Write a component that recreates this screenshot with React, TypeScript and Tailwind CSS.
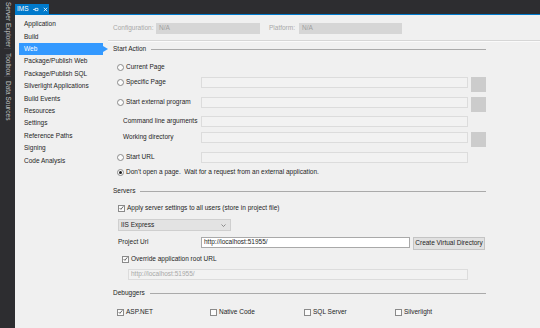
import React from "react";

const FONT = "font-['Liberation_Sans',Arial,sans-serif]";

function Radio({ checked = false }: { checked?: boolean }) {
  return (
    <span className="w-[7px] h-[7px] rounded-full border border-[#8a8a8a] bg-[#fbfbfb] flex items-center justify-center shrink-0">
      {checked && <span className="w-[3px] h-[3px] rounded-full bg-[#1e1e1e]" />}
    </span>
  );
}

function Check({ checked = false }: { checked?: boolean }) {
  return (
    <span className="w-[7px] h-[7px] border border-[#8a8a8a] bg-[#fbfbfb] flex items-center justify-center shrink-0">
      {checked && (
        <svg width="6" height="6" viewBox="0 0 6 6">
          <path d="M0.8 3.1 L2.3 4.6 L5.2 1.0" fill="none" stroke="#333" strokeWidth="0.9" />
        </svg>
      )}
    </span>
  );
}

function Header({ label, className = "" }: { label: string; className?: string }) {
  return (
    <div className={`flex items-center w-[373px] h-[12px] ${className}`}>
      <span className="text-[#1e1e1e]">{label}</span>
      <div className="flex-1 ml-[5px] border-t border-[#aaaaaa]" />
    </div>
  );
}

function DisabledBox({ w = "w-[267px]" }: { w?: string }) {
  return <div className={`${w} h-[11px] border border-[#dcdcdc] bg-[#f2f2f2] shrink-0`} />;
}

function GrayBtn() {
  return <div className="w-[15px] h-[15px] bg-[#cccccc] ml-[3px] shrink-0" />;
}

const navItems = [
  "Application",
  "Build",
  "Web",
  "Package/Publish Web",
  "Package/Publish SQL",
  "Silverlight Applications",
  "Build Events",
  "Resources",
  "Settings",
  "Reference Paths",
  "Signing",
  "Code Analysis",
];

export default function App() {
  return (
    <div className={`w-[540px] h-[328px] flex bg-[#2d2d30] overflow-hidden text-[6.5px] leading-none ${FONT}`}>
      {/* left tool sidebar */}
      <div className="w-[15px] h-full bg-[#2d2d30] flex flex-col items-center text-[#c4c4c4] shrink-0">
        <div className="h-[49px] pt-[2px] flex justify-center border-b border-[#3f3f46]">
          <span className="[writing-mode:vertical-rl] whitespace-nowrap">Server Explorer</span>
        </div>
        <div className="h-[28px] pt-[4px] flex justify-center border-b border-[#3f3f46]">
          <span className="[writing-mode:vertical-rl] whitespace-nowrap">Toolbox</span>
        </div>
        <div className="h-[44px] pt-[4px] flex justify-center">
          <span className="[writing-mode:vertical-rl] whitespace-nowrap">Data Sources</span>
        </div>
      </div>

      <div className="flex-1 flex flex-col">
        {/* tab bar */}
        <div className="h-[14px] flex items-end bg-[#2d2d30]">
          <div className="h-[10px] w-[34px] bg-[#007acc] flex items-center pl-[2px] text-white gap-[4px]">
            <span>IMS</span>
            <svg width="6" height="5" viewBox="0 0 6 5">
              <path d="M0 2.5 H2.2 M2.2 1 V4 M2.2 1.4 H5 V3.6 H2.2" fill="none" stroke="#fff" strokeWidth="0.7" />
            </svg>
            <svg width="5" height="5" viewBox="0 0 5 5">
              <path d="M0.8 0.8 L4.2 4.2 M4.2 0.8 L0.8 4.2" stroke="#fff" strokeWidth="0.8" />
            </svg>
          </div>
        </div>
        <div className="h-[1px] bg-[#007acc]" />

        {/* content */}
        <div className="flex-1 flex bg-[#f0f0f0]">
          {/* nav */}
          <div className="w-[93px] pt-[3.3px] flex flex-col text-[#1e1e1e]">
            {navItems.map((item) =>
              item === "Web" ? (
                <div key={item} className="relative h-[12.4px] ml-[4px] w-[84px] bg-[#3399ff] text-white flex items-center pl-[5px]">
                  {item}
                  <span className="absolute right-[-5px] top-[2.7px] w-0 h-0 border-y-[3.5px] border-y-transparent border-l-[5px] border-l-[#3399ff]" />
                </div>
              ) : (
                <div key={item} className="h-[12.4px] flex items-center pl-[9px]">
                  {item}
                </div>
              )
            )}
          </div>

          {/* main */}
          <div className="flex-1 flex flex-col text-[#1e1e1e]">
            {/* config row */}
            <div className="mt-[8px] h-[11px] pl-[5px] flex items-center">
              <span className="w-[43px] text-[#a8a8a8]">Configuration:</span>
              <div className="w-[104px] h-[11px] bg-[#d6d6d6] text-[#a0a0a0] flex items-center pl-[3px]">N/A</div>
              <span className="ml-[9px] w-[30px] text-[#a8a8a8]">Platform:</span>
              <div className="w-[103px] h-[11px] bg-[#d6d6d6] text-[#a0a0a0] flex items-center pl-[3px]">N/A</div>
            </div>
            <div className="mt-[6px] h-[2px] border-t border-[#d6d6d6] bg-[#fafafa]" />

            <div className="pl-[5px] flex flex-col">
              <Header label="Start Action" className="mt-[1px]" />

              {/* Current Page */}
              <div className="mt-[6px] h-[12px] pl-[4px] flex items-center gap-[2px]">
                <Radio />
                <span>Current Page</span>
              </div>

              {/* Specific Page */}
              <div className="mt-[4px] h-[16px] flex items-start">
                <div className="w-[88px] h-[11px] pl-[4px] flex items-center gap-[2px]">
                  <Radio />
                  <span>Specific Page</span>
                </div>
                <DisabledBox />
                <GrayBtn />
              </div>

              {/* Start external program */}
              <div className="mt-[4px] h-[16px] flex items-start">
                <div className="w-[88px] h-[11px] pl-[4px] flex items-center gap-[2px] whitespace-nowrap">
                  <Radio />
                  <span>Start external program</span>
                </div>
                <DisabledBox />
                <GrayBtn />
              </div>

              {/* Command line */}
              <div className="mt-[3px] h-[11px] flex items-start">
                <div className="w-[88px] h-[11px] pl-[10px] flex items-center whitespace-nowrap">Command line arguments</div>
                <DisabledBox />
              </div>

              {/* Working directory */}
              <div className="mt-[5px] h-[16px] flex items-start">
                <div className="w-[88px] h-[11px] pl-[10px] flex items-center">Working directory</div>
                <DisabledBox />
                <GrayBtn />
              </div>

              {/* Start URL */}
              <div className="mt-[4px] h-[11px] flex items-start">
                <div className="w-[88px] h-[11px] pl-[4px] flex items-center gap-[2px]">
                  <Radio />
                  <span>Start URL</span>
                </div>
                <DisabledBox />
              </div>

              {/* Don't open */}
              <div className="mt-[4px] h-[11px] pl-[4px] flex items-center gap-[2px] whitespace-pre">
                <Radio checked />
                <span>Don't open a page.  Wait for a request from an external application.</span>
              </div>

              <Header label="Servers" className="mt-[7px]" />

              {/* Apply */}
              <div className="mt-[5px] h-[12px] pl-[5px] flex items-center gap-[2px]">
                <Check checked />
                <span>Apply server settings to all users (store in project file)</span>
              </div>

              {/* Dropdown */}
              <div className="mt-[5px] h-[12px] pl-[5px] flex">
                <div className="w-[113px] h-[12px] bg-[#e3e3e3] border border-[#cfcfcf] flex items-center justify-between pl-[2px] pr-[4px]">
                  <span>IIS Express</span>
                  <svg width="5" height="3" viewBox="0 0 5 3">
                    <path d="M0.5 0.5 L2.5 2.5 L4.5 0.5" fill="none" stroke="#666" strokeWidth="0.7" />
                  </svg>
                </div>
              </div>

              {/* Project Url */}
              <div className="mt-[6px] h-[13px] flex items-start">
                <div className="w-[88px] h-[11px] pl-[5px] flex items-center">Project Url</div>
                <div className="w-[209px] h-[11px] bg-white border border-[#a9a9a9] flex items-center pl-[2px] shrink-0">
                  http://localhost:51955/
                </div>
                <div className="ml-[3px] w-[72px] h-[13px] bg-[#e1e1e1] border border-[#c4c4c4] flex items-center justify-center whitespace-nowrap shrink-0">
                  Create Virtual Directory
                </div>
              </div>

              {/* Override */}
              <div className="mt-[3px] h-[12px] pl-[9px] flex items-center gap-[2px]">
                <Check checked />
                <span>Override application root URL</span>
              </div>

              {/* disabled url */}
              <div className="mt-[4px] h-[11px] pl-[15px] flex">
                <div className="w-[340px] h-[11px] border border-[#dcdcdc] bg-[#f2f2f2] text-[#a8a8a8] flex items-center pl-[2px]">
                  http://localhost:51955/
                </div>
              </div>

              <Header label="Debuggers" className="mt-[7px]" />

              {/* debuggers */}
              <div className="mt-[7px] h-[12px] pl-[4px] flex items-center">
                <div className="w-[93px] flex items-center gap-[2px]">
                  <Check checked />
                  <span>ASP.NET</span>
                </div>
                <div className="w-[94px] flex items-center gap-[2px]">
                  <Check />
                  <span>Native Code</span>
                </div>
                <div className="w-[91px] flex items-center gap-[2px]">
                  <Check />
                  <span>SQL Server</span>
                </div>
                <div className="flex items-center gap-[2px]">
                  <Check />
                  <span>Silverlight</span>
                </div>
              </div>
            </div>
          </div>
        </div>
      </div>
    </div>
  );
}
